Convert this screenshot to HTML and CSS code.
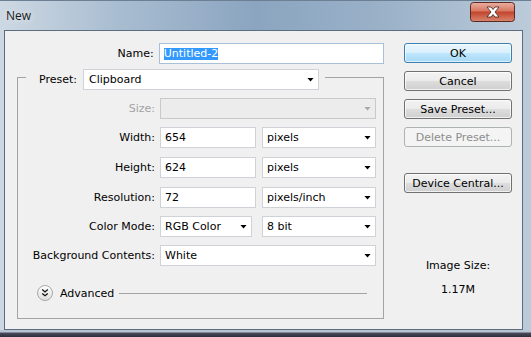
FILE: index.html
```html
<!DOCTYPE html>
<html lang="en">
<head>
    <meta charset="UTF-8">
    <title>New</title>
    <link rel="stylesheet" href="styles.css">
</head>
<body>
    <div class="window">
        <div class="titlebar">
            <span class="title">New</span>
            <span class="close">
                <svg width="45" height="20" viewBox="0 0 45 20">
                    <defs>
                        <linearGradient id="closeGrad" x1="0" y1="0" x2="0" y2="1">
                            <stop offset="0" stop-color="#eab0a2"/>
                            <stop offset="0.45" stop-color="#d77762"/>
                            <stop offset="0.5" stop-color="#c2452c"/>
                            <stop offset="1" stop-color="#d9866f"/>
                        </linearGradient>
                    </defs>
                    <rect x="0.5" y="0.5" width="44" height="19" rx="3" fill="url(#closeGrad)" stroke="#5b2a22"/>
                    <path d="M17 5h4l2 2.5l2-2.5h4l-4 5l4 5h-4l-2-2.5l-2 2.5h-4l4-5z" fill="#fff" stroke="#3c2420" stroke-width="0.8"/>
                </svg>
            </span>
        </div>

        <div class="frame">
            <div class="client">
                <div class="form">
                    <div class="name-row">
                        <label class="label name-label">Name:</label>
                        <div class="field name-field"><span class="selected">Untitled-2</span></div>
                    </div>

                    <fieldset class="group">
                        <legend class="preset">
                            <span class="label preset-label">Preset:</span>
                            <span class="combo preset-combo">Clipboard<i class="arrow"></i></span>
                        </legend>

                        <div class="rows">
                            <div class="row">
                                <span class="label disabled">Size:</span>
                                <span class="combo combo-wide combo-disabled"><i class="arrow"></i></span>
                            </div>
                            <div class="row">
                                <span class="label">Width:</span>
                                <span class="field field-num">654</span>
                                <span class="combo combo-unit">pixels<i class="arrow"></i></span>
                            </div>
                            <div class="row nudge">
                                <span class="label">Height:</span>
                                <span class="field field-num">624</span>
                                <span class="combo combo-unit">pixels<i class="arrow"></i></span>
                            </div>
                            <div class="row nudge">
                                <span class="label">Resolution:</span>
                                <span class="field field-num">72</span>
                                <span class="combo combo-unit">pixels/inch<i class="arrow"></i></span>
                            </div>
                            <div class="row">
                                <span class="label">Color Mode:</span>
                                <span class="combo combo-mode">RGB Color<i class="arrow"></i></span>
                                <span class="combo combo-unit">8 bit<i class="arrow"></i></span>
                            </div>
                            <div class="row">
                                <span class="label">Background Contents:</span>
                                <span class="combo combo-wide">White<i class="arrow"></i></span>
                            </div>
                        </div>

                        <div class="advanced">
                            <svg class="adv-btn" width="16" height="16" viewBox="0 0 16 16">
                                <defs>
                                    <linearGradient id="advGrad" x1="0" y1="0" x2="0" y2="1">
                                        <stop offset="0" stop-color="#ffffff"/>
                                        <stop offset="1" stop-color="#dcdcdc"/>
                                    </linearGradient>
                                </defs>
                                <circle cx="8" cy="8" r="7.5" fill="url(#advGrad)" stroke="#a8a8a8"/>
                                <path d="M5.2 4.6l2.8 2.3l2.8-2.3M5.2 8.4l2.8 2.3l2.8-2.3" fill="none" stroke="#111" stroke-width="1.3"/>
                            </svg>
                            <span class="adv-text">Advanced</span>
                            <span class="adv-line"></span>
                        </div>
                    </fieldset>
                </div>

                <div class="side">
                    <button class="btn btn-default">OK</button>
                    <button class="btn">Cancel</button>
                    <button class="btn">Save Preset...</button>
                    <button class="btn" disabled>Delete Preset...</button>
                    <button class="btn btn-device">Device Central...</button>

                    <div class="size-title">Image Size:</div>
                    <div class="size-value">1.17M</div>
                </div>
            </div>
        </div>
        <div class="window-bottom"></div>
    </div>
</body>
</html>
```

FILE: styles.css
```css
body {
    margin: 0;
    font-family: 'DejaVu Sans', Tahoma, Verdana, sans-serif;
    font-size: 11px;
    color: #000;
    background-color: #2d303b;
}

.window {
    width: 531px;
    height: 337px;
    display: flex;
    flex-direction: column;
    background: linear-gradient(90deg, #cdd8e3 0%, #a9bdd1 22%, #8ba5c0 48%, #9ab1c8 72%, #bccbda 100%);
    overflow: hidden;
}

.titlebar {
    height: 30px;
    flex: none;
    display: flex;
    justify-content: space-between;
    align-items: flex-start;
    padding-left: 6px;
    box-sizing: border-box;
    border-top: 1px solid #6c7f93;
}

.title {
    font-family: 'Open Sans', 'DejaVu Sans', sans-serif;
    font-size: 12px;
    line-height: 14px;
    margin-top: 8px;
    color: #1b1b1b;
    text-shadow: 0 0 6px rgba(255, 255, 255, 0.8);
}

.close {
    display: block;
    height: 20px;
    margin: 1px 16px 0 0;
}

.close svg {
    display: block;
}

.frame {
    flex: 1;
    display: flex;
    padding: 0 8px 0 4px;
}

.client {
    flex: 1;
    display: flex;
    background-color: #f0f0f0;
    border: 1px solid #5d6d80;
    padding: 12px 10px 0 0;
}

.window-bottom {
    height: 7px;
    flex: none;
    background: linear-gradient(180deg, #b9c5d2 0, #b9c5d2 2px, #4a4c5c 3px, #2b2d3a 100%);
}

/* left side: the form */

.form {
    width: 379px;
}

.label {
    text-align: right;
    white-space: nowrap;
}

.disabled {
    color: #a3a3a3;
}

.name-row {
    display: flex;
    align-items: center;
    height: 21px;
}

.name-label {
    width: 150px;
    margin-right: 5px;
}

.field,
.combo {
    box-sizing: border-box;
    height: 21px;
    display: flex;
    align-items: center;
    background-color: #fff;
    border: 1px solid #cfd3d8;
    padding-left: 4px;
    white-space: nowrap;
}

.name-field {
    width: 227px;
    border-color: #a9c1d8;
}

.selected {
    background-color: #3399ff;
    color: #fff;
    line-height: 12px;
}

.combo {
    justify-content: space-between;
    padding-right: 4px;
}

.arrow {
    display: block;
    width: 7px;
    height: 4px;
    background-color: #000;
    clip-path: polygon(0 0, 100% 0, 50% 100%);
}

.combo-disabled {
    background-color: #ececec;
    border-color: #c9c9c9;
    justify-content: flex-end;
}

.combo-disabled .arrow {
    background-color: #a6a6a6;
}

.group {
    margin: 1px 0 0 12px;
    width: 367px;
    box-sizing: border-box;
    border: 1px solid #a3a3a3;
    padding: 8px 0 17px 0;
    min-width: 0;
}

.preset {
    display: flex;
    align-items: center;
    margin-left: 8px;
    padding: 4px 6px 0 0;
}

.preset-label {
    width: 51px;
    margin-right: 6px;
}

.preset-combo {
    width: 236px;
    padding-left: 5px;
}

.rows {
    display: flex;
    flex-direction: column;
    gap: 8px;
}

.row {
    display: flex;
    align-items: center;
    height: 21px;
}

.row.nudge {
    margin-top: 1px;
}

.row .label {
    width: 137px;
    margin-right: 5px;
}

.field-num {
    width: 96px;
    margin-right: 6px;
}

.combo-unit {
    width: 114px;
}

.combo-mode {
    width: 92px;
    margin-right: 10px;
}

.combo-wide {
    width: 216px;
}

.advanced {
    display: flex;
    align-items: center;
    height: 16px;
    margin-top: 19px;
    padding-left: 19px;
    padding-right: 16px;
}

.adv-btn {
    display: block;
    flex: none;
}

.adv-text {
    margin-left: 7px;
    margin-right: 5px;
}

.adv-line {
    flex: 1;
    height: 1px;
    background-color: #a3a3a3;
}

/* right side: buttons */

.side {
    width: 108px;
    margin-left: 20px;
    display: flex;
    flex-direction: column;
    align-items: stretch;
}

.btn {
    height: 20px;
    margin-bottom: 8px;
    padding: 0;
    font-family: inherit;
    font-size: 11px;
    color: #000;
    border: 1px solid #707070;
    border-radius: 3px;
    background: linear-gradient(180deg, #f3f3f3 0%, #ebebeb 48%, #dddddd 52%, #cfcfcf 100%);
    box-shadow: inset 0 0 0 1px rgba(255, 255, 255, 0.7);
}

.btn-default {
    border-color: #3c7fb1;
    background: linear-gradient(180deg, #eaf6fd 0%, #d9f0fc 48%, #bee6fd 52%, #a7d9f5 100%);
    box-shadow: inset 0 0 0 1px rgba(255, 255, 255, 0.6);
}

.btn:disabled {
    color: #8d8d8d;
    border-color: #adb2b5;
    background: #f4f4f4;
    box-shadow: none;
}

.btn-device {
    margin-top: 18px;
}

.size-title,
.size-value {
    text-align: center;
    line-height: 14px;
}

.size-title {
    margin-top: 58px;
}

.size-value {
    margin-top: 10px;
}
```
